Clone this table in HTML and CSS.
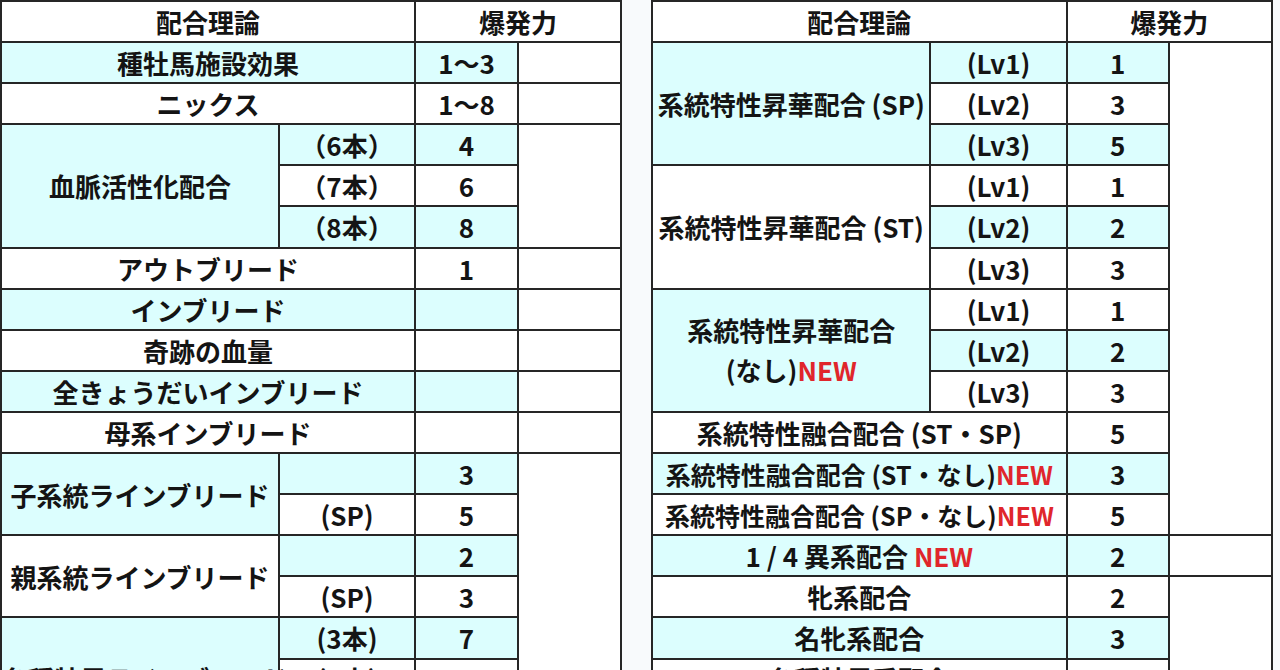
FILE: index.html
```html
<!DOCTYPE html>
<html lang="ja">
<head>
<meta charset="utf-8">
<title>配合理論 爆発力</title>
<link rel="stylesheet" href="styles.css">
</head>
<body>
<div class="wrap">
  <table class="tbl">
    <colgroup><col class="c1"><col class="c2"><col class="c3"><col class="c4"></colgroup>
    <tr class="head"><td colspan="2">配合理論</td><td colspan="2">爆発力</td></tr>
    <tr><td colspan="2" class="cy">種牡馬施設効果</td><td class="cy">1～3</td><td></td></tr>
    <tr><td colspan="2">ニックス</td><td>1～8</td><td></td></tr>
    <tr><td rowspan="3" class="cy">血脈活性化配合</td><td class="cy">（6本）</td><td class="cy">4</td><td rowspan="3"></td></tr>
    <tr><td>（7本）</td><td>6</td></tr>
    <tr><td class="cy">（8本）</td><td class="cy">8</td></tr>
    <tr><td colspan="2">アウトブリード</td><td>1</td><td></td></tr>
    <tr><td colspan="2" class="cy">インブリード</td><td class="cy"></td><td></td></tr>
    <tr><td colspan="2">奇跡の血量</td><td></td><td></td></tr>
    <tr><td colspan="2" class="cy">全きょうだいインブリード</td><td class="cy"></td><td></td></tr>
    <tr><td colspan="2">母系インブリード</td><td></td><td></td></tr>
    <tr><td rowspan="2" class="cy">子系統ラインブリード</td><td class="cy"></td><td class="cy">3</td><td rowspan="8"></td></tr>
    <tr><td>(SP)</td><td>5</td></tr>
    <tr><td rowspan="2">親系統ラインブリード</td><td class="cy"></td><td class="cy">2</td></tr>
    <tr><td>(SP)</td><td>3</td></tr>
    <tr><td rowspan="3" class="cy">名種牡馬ラインブリード</td><td class="cy">(3本)</td><td class="cy">7</td></tr>
    <tr><td>(4本)</td><td>8</td></tr>
    <tr><td class="cy">(5本)</td><td class="cy">9</td></tr>
  </table>
  <table class="tbl">
    <colgroup><col class="c1"><col class="c2"><col class="c3r"><col class="c4"></colgroup>
    <tr class="head"><td colspan="2">配合理論</td><td colspan="2">爆発力</td></tr>
    <tr><td rowspan="3" class="cy">系統特性昇華配合 (SP)</td><td class="cy">(Lv1)</td><td class="cy">1</td><td rowspan="12"></td></tr>
    <tr><td>(Lv2)</td><td>3</td></tr>
    <tr><td class="cy">(Lv3)</td><td class="cy">5</td></tr>
    <tr><td rowspan="3">系統特性昇華配合 (ST)</td><td>(Lv1)</td><td>1</td></tr>
    <tr><td class="cy">(Lv2)</td><td class="cy">2</td></tr>
    <tr><td>(Lv3)</td><td>3</td></tr>
    <tr><td rowspan="3" class="cy two">系統特性昇華配合<br>(なし)<span class="new">NEW</span></td><td>(Lv1)</td><td>1</td></tr>
    <tr><td class="cy">(Lv2)</td><td class="cy">2</td></tr>
    <tr><td>(Lv3)</td><td>3</td></tr>
    <tr><td colspan="2">系統特性融合配合 (ST・SP)</td><td>5</td></tr>
    <tr><td colspan="2" class="cy sm">系統特性融合配合 (ST・なし)<span class="new">NEW</span></td><td class="cy">3</td></tr>
    <tr><td colspan="2" class="sm">系統特性融合配合 (SP・なし)<span class="new">NEW</span></td><td>5</td></tr>
    <tr><td colspan="2" class="cy">1 / 4 異系配合 <span class="new">NEW</span></td><td class="cy">2</td><td></td></tr>
    <tr><td colspan="2">牝系配合</td><td>2</td><td rowspan="5"></td></tr>
    <tr><td colspan="2" class="cy">名牝系配合</td><td class="cy">3</td></tr>
    <tr><td colspan="2">名種牡馬系配合</td><td>4</td></tr>
    <tr><td colspan="2" class="cy">名馬系配合</td><td class="cy">5</td></tr>
  </table>
</div>
</body>
</html>
```

FILE: styles.css
```css
html, body {
  margin: 0;
  padding: 0;
}
body {
  background: #f8fafc;
  font-family: "Noto Sans CJK JP", "Noto Sans", sans-serif;
  font-weight: bold;
  color: #141414;
  overflow: hidden;
}
.wrap {
  display: flex;
  align-items: flex-start;
  gap: 29px;
}
.tbl {
  border-collapse: collapse;
  table-layout: fixed;
  background: #ffffff;
  width: 622px;
}
.c1 { width: 278px; }
.c2 { width: 136px; }
.c3 { width: 103px; }
.c3r { width: 102px; }
.c4 { width: 103px; }
.tbl tr {
  height: 41.1px;
}
.tbl td {
  border: 2px solid #262626;
  padding: 0;
  text-align: center;
  vertical-align: middle;
  font-size: 26px;
  line-height: 1.2;
  white-space: nowrap;
  overflow: visible;
}
.tbl td.cy {
  background: #dcfefe;
}
.tbl td.sm {
  font-size: 25px;
}
.tbl td.two {
  white-space: normal;
  line-height: 1.55;
}
.new {
  color: #e0262c;
}
```
